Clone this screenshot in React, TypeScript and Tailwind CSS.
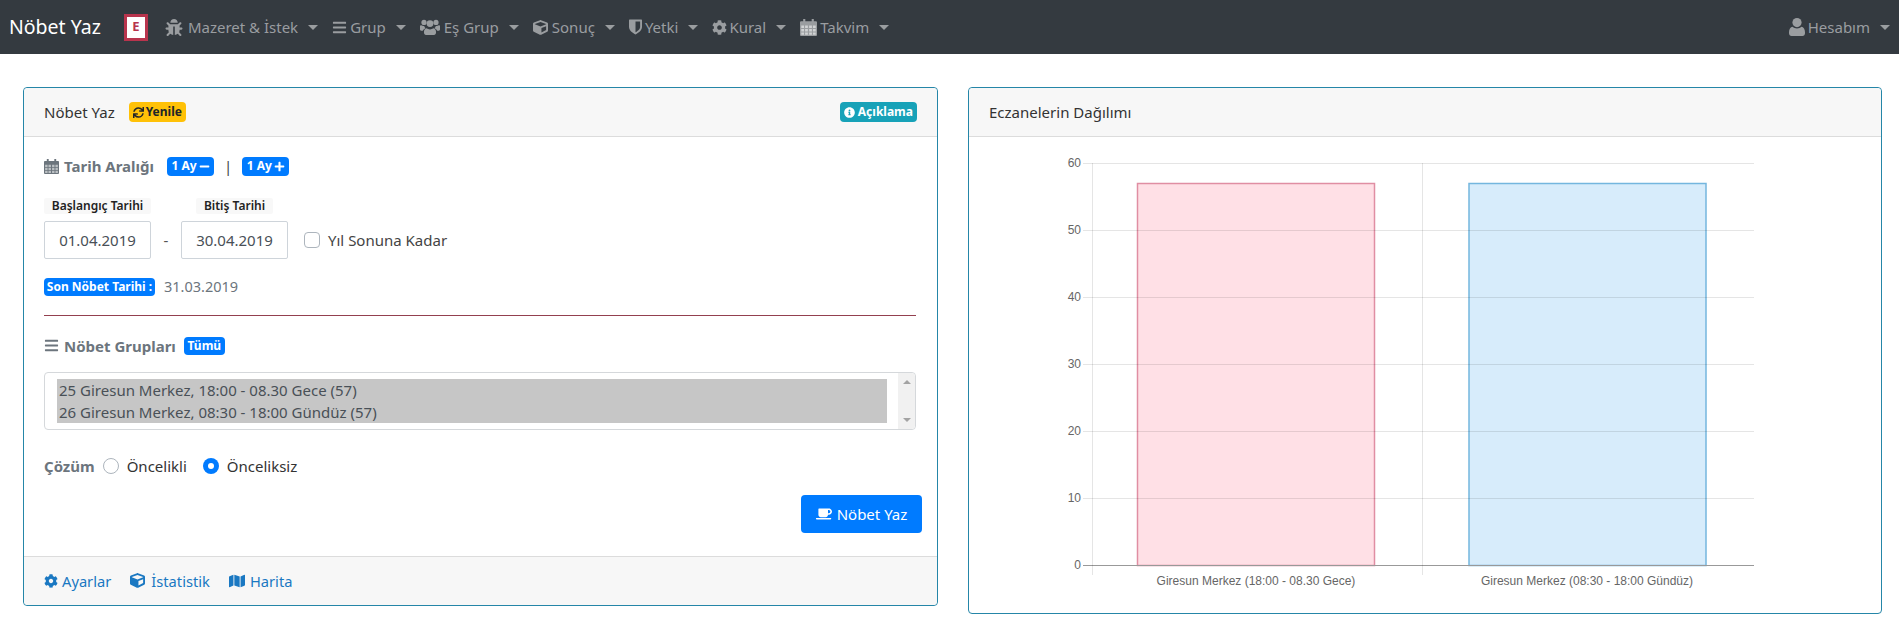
import { FaBug, FaBars, FaCube, FaCog, FaSync, FaInfoCircle, FaMinus, FaPlus, FaCoffee, FaMap } from "react-icons/fa";
import type { ReactNode } from "react";

// the page uses Font Awesome 4 glyphs, these ones differ too much from the fa5 set
function CalendarIcon({ className }: { className: string }) {
  return (
    <svg viewBox="0 0 16 16" className={className} fill="currentColor">
      <path d="M3 0h2v2h6V0h2v2h2a1 1 0 0 1 1 1v12a1 1 0 0 1-1 1H1a1 1 0 0 1-1-1V3a1 1 0 0 1 1-1h2z" />
      <path
        fill="#ffffff"
        fillOpacity="0.55"
        d="M1.2 6h2.6v2.4H1.2zM4.8 6h2.6v2.4H4.8zM8.6 6h2.6v2.4H8.6zM12.2 6h2.6v2.4h-2.6zM1.2 9.4h2.6v2.4H1.2zM4.8 9.4h2.6v2.4H4.8zM8.6 9.4h2.6v2.4H8.6zM12.2 9.4h2.6v2.4h-2.6zM1.2 12.6h2.6v2.2H1.2zM4.8 12.6h2.6v2.2H4.8zM8.6 12.6h2.6v2.2H8.6zM12.2 12.6h2.6v2.2h-2.6z"
      />
    </svg>
  );
}

function UsersIcon({ className }: { className: string }) {
  return (
    <svg viewBox="0 0 20 16" className={className} fill="currentColor">
      <circle cx="4" cy="3.4" r="2.6" />
      <circle cx="16" cy="3.4" r="2.6" />
      <circle cx="10" cy="4.6" r="3.4" />
      <path d="M0 7.2c0-.8.6-1.2 1.2-1 .8.5 1.8.8 3 .7.2.9.7 1.7 1.4 2.3-1.3.4-2.3 1.3-2.8 2.5H1.2C.4 11.7 0 11.3 0 10.6z" />
      <path d="M20 7.2c0-.8-.6-1.2-1.2-1-.8.5-1.8.8-3 .7-.2.9-.7 1.7-1.4 2.3 1.3.4 2.3 1.3 2.8 2.5h1.6c.8 0 1.2-.4 1.2-1.1z" />
      <path d="M6.5 9.3c1 .7 2.2 1.1 3.5 1.1s2.5-.4 3.5-1.1c1.5.3 2.5 1.7 2.5 3.4v1.1c0 1.2-.8 2.2-2 2.2H6c-1.2 0-2-1-2-2.2v-1.1c0-1.7 1-3.1 2.5-3.4z" />
    </svg>
  );
}

function ShieldIcon({ className }: { className: string }) {
  return (
    <svg viewBox="0 0 14 16" className={className} fill="currentColor">
      <path
        fillRule="evenodd"
        d="M.6 0h12.8c.3 0 .6.3.6.6V8c0 4-4.600 6.900-7 8-2.400-1.100-7-4-7-8V.6C0 .3.300 0 .6 0zM7 2v11.700c1.800-1 5-3.200 5-5.700V2z"
      />
    </svg>
  );
}

function UserIcon({ className }: { className: string }) {
  return (
    <svg viewBox="0 0 16 18" className={className} fill="currentColor">
      <circle cx="8" cy="4.6" r="4.6" />
      <path d="M3.6 8.800C4.700 9.900 6.300 10.500 8 10.500s3.300-.6 4.400-1.700c2.200.3 3.600 2.600 3.600 5.400v1c0 1.600-1 2.800-2.600 2.800H2.600C1 18 0 16.800 0 15.200v-1c0-2.800 1.400-5.100 3.600-5.400z" />
    </svg>
  );
}

const menu = [
  { label: "Mazeret & İstek", icon: <FaBug className="h-[17px] w-[18px]" />, gap: "gap-[5px]" },
  { label: "Grup", icon: <FaBars className="size-[15px]" />, gap: "gap-[3px]" },
  { label: "Eş Grup", icon: <UsersIcon className="h-[16px] w-[20px]" />, gap: "gap-[4px]" },
  { label: "Sonuç", icon: <FaCube className="size-[15px]" />, gap: "gap-[4px]" },
  { label: "Yetki", icon: <ShieldIcon className="h-[16px] w-[13px]" />, gap: "gap-[3px]" },
  { label: "Kural", icon: <FaCog className="size-[15px]" />, gap: "gap-[2px]" },
  { label: "Takvim", icon: <CalendarIcon className="size-[17px]" />, gap: "gap-[3px]" },
];

function Caret() {
  return <span className="ml-[10px] border-x-[5px] border-t-[5px] border-x-transparent border-t-current" />;
}

function Badge({ children, className }: { children: ReactNode; className: string }) {
  return (
    <span className={`inline-flex items-center justify-center rounded-[4px] text-[12px] leading-none font-bold ${className}`}>
      {children}
    </span>
  );
}

function Card({ className, children }: { className: string; children: ReactNode }) {
  return (
    <section className={`flex flex-col rounded-[4px] border border-[#2586a8] bg-white ${className}`}>{children}</section>
  );
}

function CardHeader({ children }: { children: ReactNode }) {
  return (
    <div className="flex h-[49px] shrink-0 items-center rounded-t-[4px] border-b border-[#dcdcdc] bg-[#f7f7f7] px-5 text-[15px] text-[#333]">
      {children}
    </div>
  );
}

function DateField({ label, value }: { label: string; value: string }) {
  return (
    <div className="flex w-[107px] flex-col items-center">
      <span className="mb-[7px] h-[16px] rounded-[2px] bg-[#f8f8f8] px-2 text-[12px] leading-[16px] font-semibold whitespace-nowrap text-[#222]">
        {label}
      </span>
      <div className="flex h-[38px] w-full items-center justify-center rounded-[2px] border border-[#ced4da] text-[15px] text-[#495057]">
        {value}
      </div>
    </div>
  );
}

function Radio({ label, checked }: { label: string; checked?: boolean }) {
  return (
    <label className="flex items-center gap-2 text-[15px] text-[#333]">
      <span
        className={
          checked
            ? "flex size-4 items-center justify-center rounded-full bg-[#007bff]"
            : "size-4 rounded-full border border-[#adb5bd] bg-white"
        }
      >
        {checked && <span className="size-[6px] rounded-full bg-white" />}
      </span>
      {label}
    </label>
  );
}

function Chart() {
  const ticks = [60, 50, 40, 30, 20, 10, 0];
  return (
    <svg width="912" height="476" className="block" style={{ fontFamily: "'Liberation Sans', sans-serif" }}>
      {/* svg origin sits at x=969, y=137 on the page */}
      <rect x="168.5" y="46.5" width="237" height="382" fill="#ff6384" fillOpacity="0.2" stroke="#e08ea3" strokeWidth="1.5" />
      <rect x="500" y="46.5" width="237" height="382" fill="#36a2eb" fillOpacity="0.2" stroke="#74b6de" strokeWidth="1.5" />
      {ticks.map((t, i) => {
        const y = 26.5 + i * 67;
        return (
          <g key={t}>
            <line x1={114} x2={785} y1={y} y2={y} stroke={t === 0 ? "#999" : "#000"} strokeOpacity={t === 0 ? 1 : 0.1} />
            <text x={112} y={y + 3} textAnchor="end" fontSize="12" fill="#666">
              {t}
            </text>
          </g>
        );
      })}
      <line x1={123.5} x2={123.5} y1={26} y2={438} stroke="#000" strokeOpacity="0.1" />
      <line x1={453.5} x2={453.5} y1={26} y2={438} stroke="#000" strokeOpacity="0.1" />
      <text x={287} y={448} textAnchor="middle" fontSize="12" fill="#666">
        Giresun Merkez (18:00 - 08.30 Gece)
      </text>
      <text x={618} y={448} textAnchor="middle" fontSize="12" fill="#666">
        Giresun Merkez (08:30 - 18:00 Gündüz)
      </text>
    </svg>
  );
}

export default function App() {
  return (
    <div className="min-h-[625px] bg-white font-['Noto_Sans',sans-serif]">
      <nav className="flex h-[54px] items-center bg-[#343a40] pr-[9px] pl-[9px]">
        <span className="text-[19.5px] text-white">Nöbet Yaz</span>
        <span className="ml-[23px] flex h-[27px] w-[24px] items-center justify-center border-[3px] border-[#b8344d] bg-white text-[13px] font-bold text-[#b8344d]">
          E
        </span>
        <div className="ml-[17px] flex items-center gap-[14px]">
          {menu.map((m) => (
            <a key={m.label} className={`flex items-center text-[15px] text-[#9a9da0] ${m.gap}`}>
              {m.icon}
              <span className="flex items-center">
                {m.label}
                <Caret />
              </span>
            </a>
          ))}
        </div>
        <a className="ml-auto flex items-center gap-[3px] text-[15px] text-[#9a9da0]">
          <UserIcon className="h-[18px] w-[16px]" />
          <span className="flex items-center">
            Hesabım
            <Caret />
          </span>
        </a>
      </nav>

      <main className="flex items-start gap-[30px] pt-[33px] pl-[23px]">
        <Card className="h-[519px] w-[915px]">
          <CardHeader>
            Nöbet Yaz
            <Badge className="ml-[14px] h-5 gap-[2px] bg-[#ffc107] px-1 text-[#212529]">
              <FaSync className="size-[11px]" />
              Yenile
            </Badge>
            <Badge className="ml-auto h-5 gap-[3px] bg-[#17a2b8] px-1 text-white">
              <FaInfoCircle className="size-[11px]" />
              Açıklama
            </Badge>
          </CardHeader>

          <div className="flex flex-1 flex-col px-5 pt-[19px]">
            <div className="flex h-[20px] items-center text-[#6c757d]">
              <CalendarIcon className="size-[15px]" />
              <span className="ml-[5px] text-[15px] font-bold">Tarih Aralığı</span>
              <Badge className="ml-[13px] h-[19px] w-[47px] gap-[2px] bg-[#007bff] text-white">
                1 Ay
                <FaMinus className="size-[11px]" />
              </Badge>
              <span className="mx-[10px] text-[15px] text-[#444]">|</span>
              <Badge className="h-[19px] w-[47px] gap-[2px] bg-[#007bff] text-white">
                1 Ay
                <FaPlus className="size-[11px]" />
              </Badge>
            </div>

            <div className="mt-[22px] flex items-end">
              <DateField label="Başlangıç Tarihi" value="01.04.2019" />
              <span className="flex h-[38px] w-[30px] items-center justify-center text-[15px] text-[#555]">-</span>
              <DateField label="Bitiş Tarihi" value="30.04.2019" />
              <label className="ml-4 flex h-[38px] items-center gap-2 text-[15px] text-[#444]">
                <span className="size-4 rounded-[4px] border border-[#adb5bd] bg-white" />
                Yıl Sonuna Kadar
              </label>
            </div>

            <div className="mt-[17px] flex items-center">
              <Badge className="h-[18px] w-[111px] bg-[#007bff] text-white">Son Nöbet Tarihi :</Badge>
              <span className="ml-[9px] text-[14.5px] text-[#6c757d]">31.03.2019</span>
            </div>

            <div className="mt-[17px] mr-[1px] border-t border-[#93404f]" />

            <div className="mt-[20px] flex h-[20px] items-center text-[#6c757d]">
              <FaBars className="size-[15px]" />
              <span className="ml-[5px] text-[15px] font-bold">Nöbet Grupları</span>
              <Badge className="ml-2 h-[18px] w-[41px] bg-[#007bff] text-white">Tümü</Badge>
            </div>

            <div className="mt-[16px] mr-[1px] flex h-[58px] rounded-[4px] border border-[#d5d8db]">
              <div className="flex flex-1 py-[6px] pr-[11px] pl-[12px]">
                <div className="flex-1 bg-[#c6c6c6] pl-[2px] text-[15px] leading-[22px] text-[#495057]">
                  <div>25 Giresun Merkez, 18:00 - 08.30 Gece (57)</div>
                  <div>26 Giresun Merkez, 08:30 - 18:00 Gündüz (57)</div>
                </div>
              </div>
              <div className="flex w-[17px] flex-col items-center justify-between rounded-r-[4px] bg-[#f1f1f1] py-[7px]">
                <span className="border-x-[4px] border-b-[4px] border-x-transparent border-b-[#a3a3a3]" />
                <span className="border-x-[4px] border-t-[4px] border-x-transparent border-t-[#a3a3a3]" />
              </div>
            </div>

            <div className="mt-[25px] flex h-[22px] items-center">
              <span className="text-[15px] font-bold text-[#6c757d]">Çözüm</span>
              <div className="ml-2 flex items-center gap-4">
                <Radio label="Öncelikli" />
                <Radio label="Önceliksiz" checked />
              </div>
            </div>

            <div className="mt-[18px] -mr-[5px] flex justify-end">
              <button className="flex h-[38px] w-[121px] items-center justify-center gap-[5px] rounded-[4px] bg-[#007bff] text-[15px] text-white">
                <FaCoffee className="size-[16px]" />
                Nöbet Yaz
              </button>
            </div>
          </div>

          <div className="flex h-[49px] shrink-0 items-center gap-[19px] rounded-b-[4px] border-t border-[#dcdcdc] bg-[#f7f7f7] px-5 text-[14.7px] text-[#1a78c2]">
            <a className="flex items-center gap-[4px]">
              <FaCog className="size-[14px]" />
              Ayarlar
            </a>
            <a className="flex items-center gap-[6px]">
              <FaCube className="size-[15px]" />
              İstatistik
            </a>
            <a className="flex items-center gap-[5px]">
              <FaMap className="size-[16px]" />
              Harita
            </a>
          </div>
        </Card>

        <Card className="h-[527px] w-[914px]">
          <CardHeader>Eczanelerin Dağılımı</CardHeader>
          <Chart />
        </Card>
      </main>
    </div>
  );
}
